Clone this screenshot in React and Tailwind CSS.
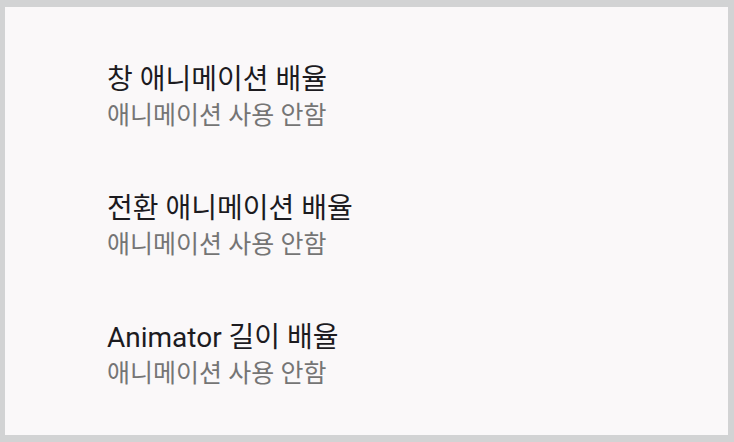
const rows = [
  { title: '창 애니메이션 배율', summary: '애니메이션 사용 안함' },
  { title: '전환 애니메이션 배율', summary: '애니메이션 사용 안함' },
  { title: 'Animator 길이 배율', summary: '애니메이션 사용 안함' },
];

function PreferenceRow({ title, summary }) {
  return (
    <div className="flex h-[129px] flex-col justify-center pl-[102px]">
      <div className="text-[28px] leading-[37px] text-[#1c1b1f]">{title}</div>
      <div className="text-[25px] leading-[36px] text-[#757575]">{summary}</div>
    </div>
  );
}

export default function App() {
  return (
    <div
      className="h-[442px] w-[734px] bg-[#d2d3d4] pb-[7px] pl-[5px] pr-[6px] pt-[7px]"
      style={{ fontFamily: 'Roboto, "Noto Sans CJK KR", sans-serif' }}
    >
      <div className="flex h-full flex-col bg-[#faf8f9] pt-[26px]">
        {rows.map((row) => (
          <PreferenceRow key={row.title} {...row} />
        ))}
      </div>
    </div>
  );
}
